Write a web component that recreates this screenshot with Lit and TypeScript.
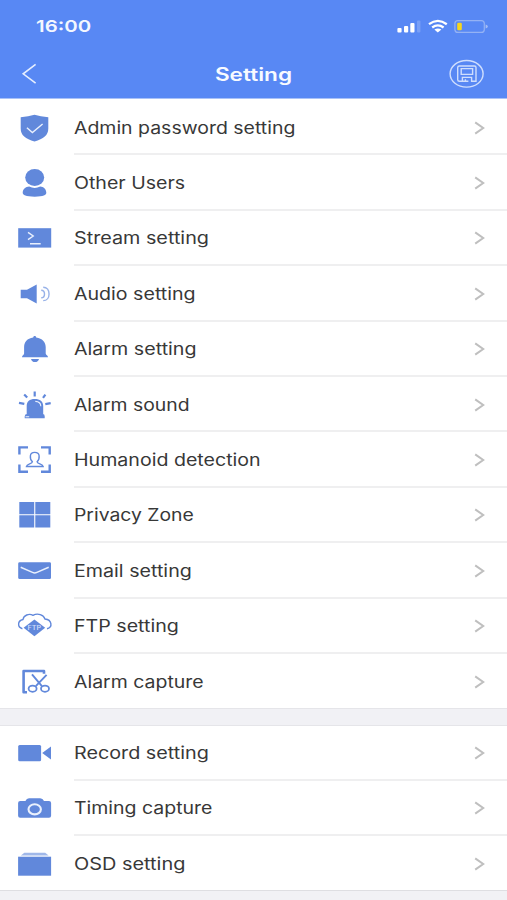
import { LitElement, html, css, svg } from "lit";
import { customElement, property } from "lit/decorators.js";
import { styleMap } from "lit/directives/style-map.js";

const icons: Record<string, unknown> = {
  shield: svg`<path class="fill" d="M3.7 5.2Q11.5 4.6 17.5 2.7Q23.5 4.6 31.3 5.2V16.5C31.3 23.5 26.5 26.6 17.5 29.6C8.5 26.6 3.7 23.5 3.7 16.5Z"/><path class="cut" stroke-width="1.4" d="M9.9 15.8L15.4 20.6L25.6 12"/>`,
  user: svg`<ellipse class="fill" cx="17.7" cy="10.5" rx="9.5" ry="8.4"/><path class="fill" d="M5.7 25.6C6 22 8.8 19.8 12.2 19.6Q17.7 22.2 23.2 19.6C26.6 19.8 29 22 29.3 25.6C29.4 28.4 26.5 29.7 17.7 29.7S5.6 28.4 5.7 25.6Z"/>`,
  stream: svg`<rect class="fill" x="1.2" y="6.2" width="33" height="19.4"/><path class="cut" stroke-width="1.4" d="M11 10.4L16.2 14L11 17.6M13 21.7H23.7"/>`,
  audio: svg`<path class="fill" d="M3.7 11.7H10L19.7 6.6V25.4L10 20.2H3.7Z"/><path class="line soft" stroke-width="1.4" d="M24.2 12.2C28.6 12.2 28.6 19.8 24.2 19.8M26.2 9.2C34 9.2 34 22.6 26.2 22.6"/>`,
  bell: svg`<path class="fill" d="M17.7 2.9C18.7 2.9 19.1 3.6 19.2 4.6C25.4 5.5 28.5 9 28.7 14V20.6C28.8 22 31 22.6 31 24.2H5C5 22.6 7 22 7.1 20.6V14C7.3 9 10 5.5 16.2 4.6C16.3 3.6 16.7 2.9 17.7 2.9ZM14 25.9H22C21.6 28 20 29 18 29S14.4 28 14 25.9Z"/>`,
  siren: svg`<path class="fill" d="M9.7 24.9V17C9.7 12.6 12.6 10 17.8 10S26.2 12.6 26.2 17V24.9ZM7.7 29.2V27.2Q7.9 24.9 10 24.9H25.8Q27.7 24.9 27.7 27.2V29.2Z"/><path class="line" stroke-width="2.2" d="M2 13.8L7.3 14.8M7.2 5.4L10.2 8.6M17.7 2.5V7.6M28.4 5.7L26 8.9M33.7 14.1L28.3 15.1"/><path class="cut" stroke-width="1.1" d="M18.3 12.4Q23.7 12.6 23.8 17.2M8.5 27.8H12.2"/>`,
  human: svg`<path class="line" stroke-width="2.4" d="M2.4 10.4V3.4H11M24 3.4H32.7V10.4M2.4 20.6V27.7H11M24 27.7H32.7V20.6"/><path class="line" stroke-width="1.4" d="M15.4 17.8C13.5 16 13.2 13.5 13.4 11.8C13.6 9.6 15.3 8.4 17.7 8.4S21.9 9.6 22.1 11.8C22.3 13.5 22 16 20.1 17.8C20.2 20.2 25.8 19.6 26.2 22.5H9.4C9.8 19.6 15.2 20.2 15.4 17.8Z"/>`,
  zone: svg`<path class="fill" d="M2.3 3H17.2V15.2H2.3ZM18.3 3H33.3V15.2H18.3ZM2.3 16.3H17.2V28.6H2.3ZM18.3 16.3H33.3V28.6H18.3Z"/>`,
  mail: svg`<rect class="fill" x="1.2" y="7.3" width="32.8" height="16.8" rx="1.4"/><path class="cut" stroke-width="1.5" d="M3.7 12.3L15.5 17.4Q17.7 18.4 19.9 17.4L31.7 12.3"/>`,
  ftp: svg`<path class="line" stroke-width="1.4" d="M5.4 18.7C.3 17.4.2 10.8 6 9.5C6.6 5.3 12 3.1 16 5.3C20.8 2.8 26.6 4.8 28 9C35 9.7 36 17.4 30 18.7"/><path class="fill" d="M17.4 9.4L28.2 17.8L17.4 26.3L6.6 17.8Z"/><text class="tiny" x="10.6" y="19.9" textLength="13.6" lengthAdjust="spacingAndGlyphs">FTP</text>`,
  clip: svg`<path class="line" stroke-width="2.6" stroke-linejoin="round" d="M27 7.7V5H6.6V26.2H10"/><path class="line" stroke-width="1.9" d="M15 8.4L24.9 20.2M29.6 8.9L18.8 20.2"/><ellipse class="line" stroke-width="1.8" cx="15.6" cy="22.7" rx="4" ry="3.1"/><ellipse class="line" stroke-width="1.8" cx="28" cy="22.7" rx="4" ry="3.1"/>`,
  video: svg`<rect class="fill" x="1.2" y="8" width="22.9" height="16.3" rx="1.5"/><path class="fill" d="M25.2 16L34 9.6V22.4Z"/>`,
  camera: svg`<path class="fill" d="M3.2 9.1H8.4Q9.6 6.3 12 6.3H23.2Q25.8 6.3 27 9.1H32Q34.1 9.1 34.1 11V23.8Q34.1 25.7 32 25.7H3.2Q1.1 25.7 1.1 23.8V11Q1.1 9.1 3.2 9.1Z"/><ellipse class="cut" stroke-width="2.1" cx="17.7" cy="17.3" rx="6.2" ry="5.1"/>`,
  osd: svg`<rect class="fill" x="1.1" y="8.7" width="33" height="19"/><path class="fill pale" d="M7.3 4.7H28.2L31.6 7.6H3.9Z"/>`,
};

@customElement("setting-row")
export class SettingRow extends LitElement {
  @property() icon = "";
  @property() label = "";
  @property({ type: Number }) stretch = 1.18;

  static styles = css`
    :host { display: flex; height: 55.4px; align-items: center; padding-left: 17px; box-sizing: border-box; }
    .icon { width: 36px; height: 32px; flex: none; }
    .fill { fill: #6188db; }
    .line { fill: none; stroke: #6188db; }
    .soft { opacity: .65; }
    .pale { opacity: .6; }
    .cut { fill: none; stroke: #e9f0fd; }
    .tiny { font: 600 5.5px Inter, sans-serif; fill: #cddbf8; }
    .body { flex: 1; margin-left: 21px; height: 100%; box-sizing: border-box; display: flex; align-items: center; justify-content: space-between; padding-right: 21px; border-bottom: 2px solid #efeff0; }
    :host([last]) .body { border-bottom-color: transparent; }
    .label { font: 400 16.6px/24px Inter, sans-serif; color: #383838; white-space: nowrap; transform-origin: left; padding-top: 2px; }
    .arrow { width: 14px; height: 16px; margin-top: 2px; }
  `;

  render() {
    return html`
      <svg class="icon" viewBox="0 0 36 32">${icons[this.icon]}</svg>
      <div class="body">
        <span class="label" style=${styleMap({ transform: `scaleX(${this.stretch})` })}>${this.label}</span>
        <svg class="arrow" viewBox="0 0 14 16"><path d="M3.2 2.4L11.2 8L3.2 13.6" fill="none" stroke="#bfbfbf" stroke-width="2"/></svg>
      </div>`;
  }
}

type Item = [icon: string, label: string, stretch: number];

@customElement("app-root")
export class AppRoot extends LitElement {
  static styles = css`
    :host { display: block; height: 900px; overflow: hidden; background: #f1f1f5; font-family: Inter, sans-serif; }
    .header { height: 99px; background: #5888f4; border-bottom: 1px solid #a9c2f8; box-sizing: border-box; color: #fff; }
    .status { height: 52px; display: flex; align-items: center; justify-content: space-between; padding: 0 18px 0 36px; }
    .time { font-size: 16.6px; font-weight: 600; transform: scaleX(1.23); transform-origin: left; color: #f3f7ff; }
    .nav { height: 44px; display: grid; grid-template-columns: 60px 1fr 60px; align-items: center; }
    .title { font-size: 18px; font-weight: 600; text-align: center; transform: scaleX(1.255); color: #f7faff; }
    .back { margin-left: 20px; }
    .group { background: #fff; box-sizing: border-box; }
    .first { height: 610px; padding-top: 1px; box-shadow: inset 0 -1px #e5e5e9; }
    .second { margin-top: 16px; height: 166px; padding-top: 0.3px; box-shadow: inset 0 1px #e5e5e9, inset 0 -1px #dedee2; }
    svg { display: block; }
  `;

  private first: Item[] = [
    ["shield", "Admin password setting", 1.173],
    ["user", "Other Users", 1.179],
    ["stream", "Stream setting", 1.191],
    ["audio", "Audio setting", 1.181],
    ["bell", "Alarm setting", 1.185],
    ["siren", "Alarm sound", 1.167],
    ["human", "Humanoid detection", 1.181],
    ["zone", "Privacy Zone", 1.167],
    ["mail", "Email setting", 1.185],
    ["ftp", "FTP setting", 1.183],
    ["clip", "Alarm capture", 1.173],
  ];

  private second: Item[] = [
    ["video", "Record setting", 1.191],
    ["camera", "Timing capture", 1.174],
    ["osd", "OSD setting", 1.199],
  ];

  private rows(items: Item[]) {
    return items.map(([icon, label, stretch], i) => html`<setting-row icon=${icon} label=${label} stretch=${stretch} ?last=${i === items.length - 1}></setting-row>`);
  }

  render() {
    return html`
      <div class="header">
        <div class="status">
          <span class="time">16:00</span>
          <svg width="93" height="16" viewBox="396 18 93 16">
            <g fill="#fff">
              <rect x="397.4" y="28" width="4.2" height="4.4" rx="1"/>
              <rect x="404" y="26" width="4.2" height="6.4" rx="1"/>
              <rect x="410.3" y="23" width="4.2" height="9.4" rx="1"/>
              <rect x="417" y="20.6" width="3.4" height="11.8" rx="1" opacity=".2"/>
            </g>
            <g fill="none" stroke="#fff" stroke-width="2.3">
              <path d="M429 24.2Q437.8 17.6 446.8 24.2"/>
              <path d="M432.2 27.5Q437.8 23.2 443.6 27.5"/>
            </g>
            <path d="M434.4 29.6Q437.8 27.2 441.4 29.6L437.8 32.4Z" fill="#fff"/>
            <rect x="454.9" y="20.6" width="29.4" height="11.8" rx="3" fill="none" stroke="#94b2f4" stroke-width="1.2"/>
            <path d="M485.6 24.4Q487.8 25 487.8 26.5T485.6 28.6Z" fill="#a5bdf5"/>
            <rect x="457.2" y="22.8" width="4.6" height="7.4" rx="1.3" fill="#f7d61c"/>
          </svg>
        </div>
        <div class="nav">
          <svg class="back" width="20" height="24" viewBox="20 62 20 24"><path d="M35.6 64.4L23.2 73.8L35.6 83.2" fill="none" stroke="#e6eefe" stroke-width="1.6"/></svg>
          <span class="title">Setting</span>
          <svg width="40" height="30" viewBox="447 59 40 30">
            <g fill="none" stroke="#cfdefd" stroke-width="1.4">
              <ellipse cx="466.6" cy="73.8" rx="16.5" ry="13.3"/>
              <path d="M459.4 66H474.4Q476 66 476 67.5V81.3H471.6V77.4H462.4V81.3H459.4Q457.7 81.3 457.7 79.8V67.5Q457.7 66 459.4 66Z"/>
              <path d="M461.2 68.6H472.6V74.4H461.2ZM465.4 81.3V79.3M462.4 81.3H468.4"/>
            </g>
          </svg>
        </div>
      </div>
      <div class="group first">${this.rows(this.first)}</div>
      <div class="group second">${this.rows(this.second)}</div>`;
  }
}
